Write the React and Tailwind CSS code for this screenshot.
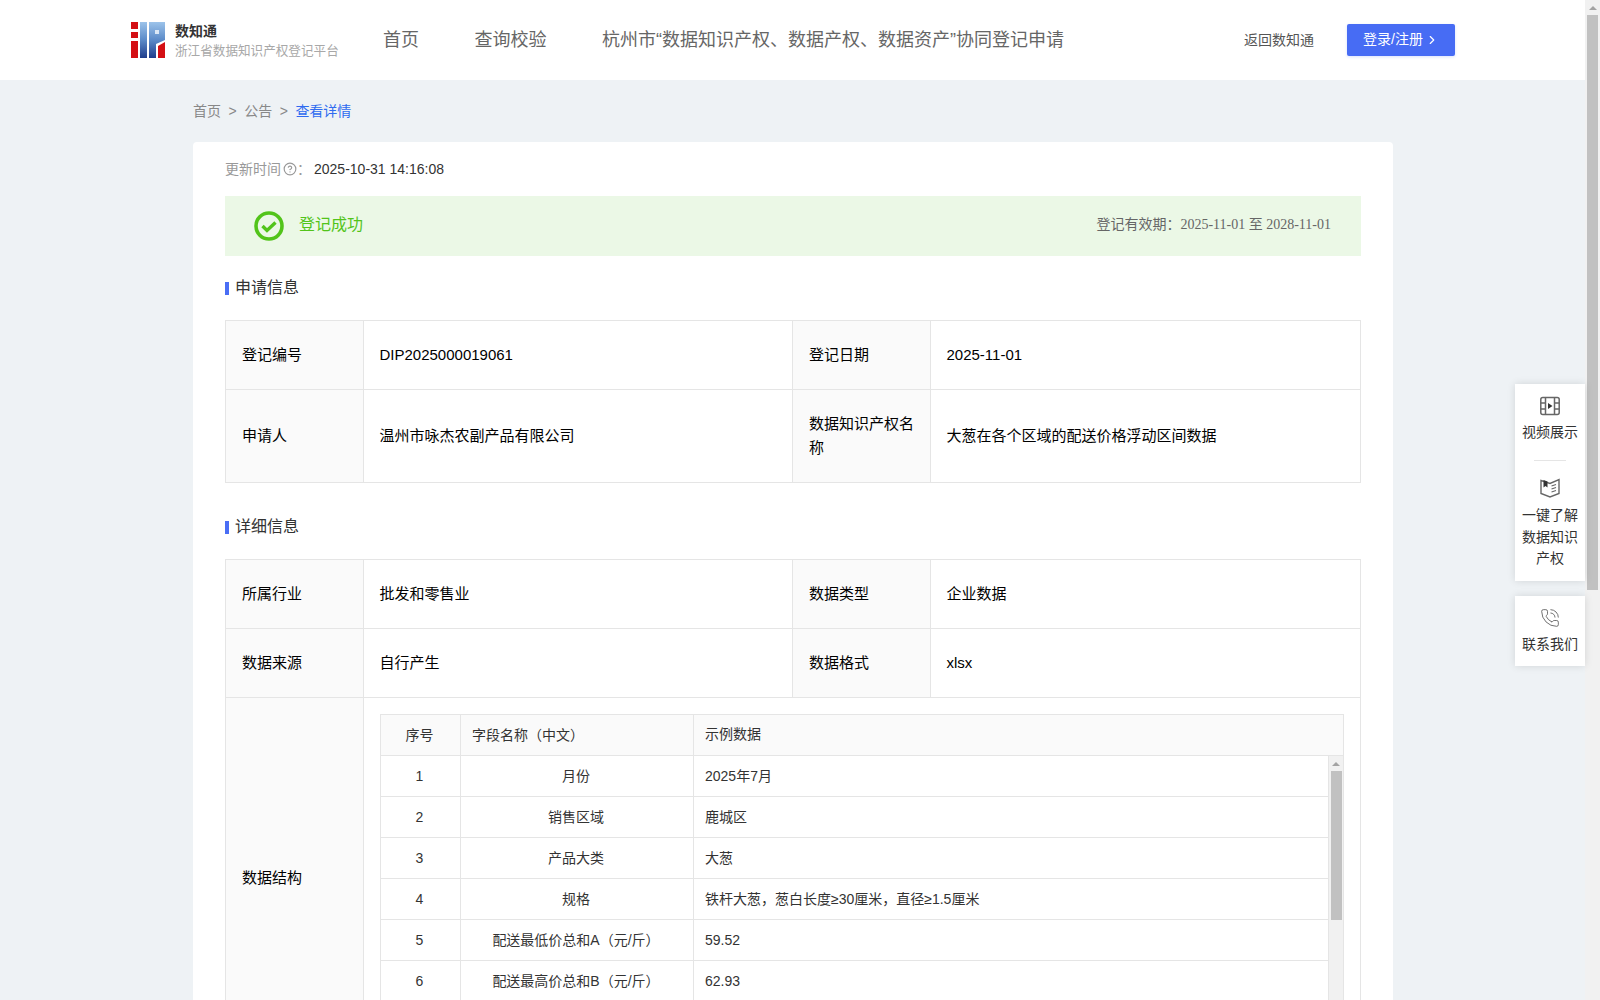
import React from "react";
import { ChevronRight, CircleHelp, PhoneCall } from "lucide-react";

const Logo = () => (
  <svg width="34" height="36" viewBox="0 0 34 36" className="shrink-0">
    <defs>
      <linearGradient id="lg" x1="0" y1="0" x2="0" y2="1">
        <stop offset="0" stopColor="#9cc3ea" />
        <stop offset="0.5" stopColor="#5b8ac8" />
        <stop offset="1" stopColor="#1f3d8c" />
      </linearGradient>
    </defs>
    <rect x="0" y="0" width="7" height="7" fill="#d40f14" />
    <rect x="0" y="10" width="7" height="6" fill="#d40f14" />
    <rect x="0" y="19" width="7" height="17" fill="#d40f14" />
    <rect x="9" y="0" width="7" height="36" fill="url(#lg)" />
    <path d="M18 0H34V18L25 22V36H18Z" fill="url(#lg)" />
    <rect x="24" y="8" width="4" height="4" fill="#dbe8f6" />
    <path d="M27 24L34 20V36H27Z" fill="#d40f14" />
  </svg>
);

const FilmIcon = () => (
  <svg width="20" height="20" viewBox="0 0 20 20" fill="none" stroke="#666" strokeWidth="1.5">
    <rect x="0.8" y="1.5" width="18.4" height="17" rx="2" />
    <path d="M5.5 1.5V18.5M14.5 1.5V18.5M0.8 7H5.5M0.8 13H5.5M14.5 7H19.2M14.5 13H19.2" />
    <path d="M8 7L12.5 10L8 13Z" fill="#333" stroke="none" />
  </svg>
);

const BookIcon = () => (
  <svg width="20" height="20" viewBox="0 0 20 20" fill="none" stroke="#666" strokeWidth="1.4">
    <path d="M1 2.5L10 5.5L19 1.5V15.5L10 19L1 15.5Z" />
    <path d="M3.5 2L7.5 3.5V9.5L5.5 8L3.5 9.5Z" fill="#333" stroke="none" />
    <path d="M11.5 8L16 6.5M11.5 11L16 9.5M11.5 14L16 12.5" strokeWidth="1.1" />
  </svg>
);

const CheckRing = () => (
  <svg width="30" height="30" viewBox="0 0 30 30" fill="none" className="shrink-0">
    <circle cx="15" cy="15" r="13" stroke="#52c41a" strokeWidth="3.6" />
    <path d="M8.5 15L13 19.5L21.5 11.5" stroke="#52c41a" strokeWidth="3.4" />
  </svg>
);

const SectionTitle = ({ children }) => (
  <div className="flex items-center h-6 text-[16px] text-[#333]">
    <span className="w-1 h-[13px] bg-[#4a6ef5] mr-[6px] mt-[3px]" />
    <span className="pt-[2px]">{children}</span>
  </div>
);

const Label = ({ children }) => (
  <td className="border border-[#e5e5e5] bg-[#fafafa] px-4 text-[15px] leading-6 text-black">{children}</td>
);
const Value = ({ children }) => (
  <td className="border border-[#e5e5e5] pl-[15.5px] pr-4 text-[15px] leading-6 text-black">{children}</td>
);

const Cols = () => (
  <colgroup>
    <col className="w-[138px]" />
    <col className="w-[429px]" />
    <col className="w-[138px]" />
    <col className="w-[430px]" />
  </colgroup>
);

const rows = [
  ["1", "月份", "2025年7月"],
  ["2", "销售区域", "鹿城区"],
  ["3", "产品大类", "大葱"],
  ["4", "规格", "铁杆大葱，葱白长度≥30厘米，直径≥1.5厘米"],
  ["5", "配送最低价总和A（元/斤）", "59.52"],
  ["6", "配送最高价总和B（元/斤）", "62.93"],
];

const InnerTable = () => (
  <div className="border border-[#e5e5e5] text-[14px] text-[#333]">
    <div className="grid grid-cols-[80px_233px_1fr] h-[41px] pb-[2px] bg-[#fafafa] border-b border-[#e5e5e5]">
      <div className="flex items-center justify-center pr-[2px] border-r border-[#e5e5e5] -mb-[2px]">序号</div>
      <div className="flex items-center pl-[11px] border-r border-[#e5e5e5] -mb-[2px]">字段名称（中文）</div>
      <div className="flex items-center pl-[11px]">示例数据</div>
    </div>
    <div className="flex h-[285px] overflow-hidden">
      <div className="flex-1 border-r border-[#e5e5e5]">
        {rows.map((r) => (
          <div key={r[0]} className="grid grid-cols-[80px_233px_1fr] h-[41px] border-b border-[#e5e5e5]">
            <div className="flex items-center justify-center pr-[2px] border-r border-[#e5e5e5]">{r[0]}</div>
            <div className="flex items-center justify-center pr-[2px] border-r border-[#e5e5e5]">{r[1]}</div>
            <div className="flex items-center pl-[11px]">{r[2]}</div>
          </div>
        ))}
      </div>
      <div className="w-[14px] bg-[#f1f1f1] flex flex-col items-center shrink-0">
        <div className="h-[15px] flex items-center justify-center">
          <span className="w-0 h-0 border-x-[4px] border-x-transparent border-b-[4px] border-b-[#a3a3a3]" />
        </div>
        <div className="w-[11px] h-[149px] bg-[#c1c1c1]" />
      </div>
    </div>
  </div>
);

const SideItem = ({ icon, textClass, children }) => (
  <div className="flex flex-col items-center">
    {icon}
    <div className={`${textClass} w-[56px] text-center text-[14px] leading-[21.8px] text-[#333]`}>{children}</div>
  </div>
);

export default function App() {
  return (
    <div className="relative flex h-screen overflow-hidden bg-[#eef2f5] [font-family:'Liberation_Sans','Noto_Sans_CJK_SC',sans-serif]">
      <div className="flex-1 min-w-0 overflow-hidden">
        <header className="h-20 bg-white flex items-center pl-[131px] pr-[130px]">
          <Logo />
          <div className="ml-[10px] w-[208px] shrink-0">
            <div className="text-[14px] leading-5 font-bold text-[#333]">数知通</div>
            <div className="pt-px text-[12.6px] leading-[18px] text-[#a8a8a8] whitespace-nowrap">浙江省数据知识产权登记平台</div>
          </div>
          <nav className="flex gap-[55.5px] text-[18px] text-[#666] whitespace-nowrap">
            <span>首页</span>
            <span>查询校验</span>
            <span>杭州市“数据知识产权、数据产权、数据资产”协同登记申请</span>
          </nav>
          <div className="ml-auto flex items-center gap-[33px]">
            <span className="text-[14px] text-[#555]">返回数知通</span>
            <button className="w-[108px] h-8 pb-px rounded-[2px] bg-[#476cf4] text-white text-[14px] flex items-center justify-center gap-[2px] shadow-[0_1px_3px_rgba(71,108,244,0.2)]">
              登录/注册 <ChevronRight size={14} />
            </button>
          </div>
        </header>

        <main className="ml-[193px] w-[1200px]">
          <div className="h-[62px] flex items-center text-[14px] text-[#888]">
            <span>首页</span>
            <span className="mx-[7.5px]">&gt;</span>
            <span>公告</span>
            <span className="mx-[7.5px]">&gt;</span>
            <span className="text-[#2f6bf0]">查看详情</span>
          </div>

          <section className="bg-white rounded-[4px] px-8 pt-4 pb-8">
            <div className="flex items-center h-[22px] text-[14px]">
              <span className="text-[#999]">更新时间</span>
              <CircleHelp size={14} className="text-[#999] ml-[2px]" />
              <span className="text-[#999]">：</span>
              <span className="text-[#333] ml-[3px]">2025-10-31 14:16:08</span>
            </div>

            <div className="mt-4 h-[60px] bg-[#ebf8e6] flex items-center pl-[29px] pr-[30px]">
              <CheckRing />
              <span className="ml-[15px] pb-[2px] text-[16px] text-[#52c41a]">登记成功</span>
              <span className="ml-auto pb-[3px] text-[14px] text-[#666]">
                登记有效期：<span className="[font-family:'Liberation_Serif','Noto_Sans_CJK_SC',serif]">2025-11-01 至 2028-11-01</span>
              </span>
            </div>

            <div className="mt-[19px] mb-[21px]">
              <SectionTitle>申请信息</SectionTitle>
            </div>

            <table className="w-[1135px] table-fixed border-collapse">
              <Cols />
              <tbody>
                <tr className="h-[69px]">
                  <Label>登记编号</Label>
                  <Value>DIP2025000019061</Value>
                  <Label>登记日期</Label>
                  <Value>2025-11-01</Value>
                </tr>
                <tr className="h-[93px]">
                  <Label>申请人</Label>
                  <Value>温州市咏杰农副产品有限公司</Value>
                  <Label>数据知识产权名称</Label>
                  <Value>大葱在各个区域的配送价格浮动区间数据</Value>
                </tr>
              </tbody>
            </table>

            <div className="mt-[31px] mb-[21px]">
              <SectionTitle>详细信息</SectionTitle>
            </div>

            <table className="w-[1135px] table-fixed border-collapse">
              <Cols />
              <tbody>
                <tr className="h-[69px]">
                  <Label>所属行业</Label>
                  <Value>批发和零售业</Value>
                  <Label>数据类型</Label>
                  <Value>企业数据</Value>
                </tr>
                <tr className="h-[69px]">
                  <Label>数据来源</Label>
                  <Value>自行产生</Value>
                  <Label>数据格式</Label>
                  <Value>xlsx</Value>
                </tr>
                <tr className="h-[360px]">
                  <Label>数据结构</Label>
                  <td colSpan={3} className="border border-[#e5e5e5] px-4 py-4 align-top">
                    <InnerTable />
                  </td>
                </tr>
              </tbody>
            </table>
          </section>
        </main>
      </div>

      <div className="w-[15px] shrink-0 bg-[#f1f1f1] flex flex-col items-center">
        <div className="h-[15px] flex items-center justify-center">
          <span className="w-0 h-0 border-x-[4px] border-x-transparent border-b-[4px] border-b-[#a3a3a3]" />
        </div>
        <div className="w-[11px] h-[575px] bg-[#c1c1c1]" />
      </div>

      <aside className="absolute right-[15px] top-[384px] w-[70px] flex flex-col gap-[15px]">
        <div className="bg-white h-[197px] pt-3 flex flex-col items-center shadow-[0_0_8px_rgba(0,0,0,0.12)]">
          <SideItem icon={<FilmIcon />} textClass="mt-[6px]">视频展示</SideItem>
          <div className="w-8 h-px bg-[#e5e5e5] mt-4 mb-[17px]" />
          <SideItem icon={<BookIcon />} textClass="mt-[7px]">一键了解数据知识产权</SideItem>
        </div>
        <div className="bg-white h-[70px] pt-3 flex flex-col items-center shadow-[0_0_8px_rgba(0,0,0,0.12)]">
          <SideItem icon={<PhoneCall size={20} strokeWidth={1} className="text-[#555]" />} textClass="mt-[6px]">联系我们</SideItem>
        </div>
      </aside>
    </div>
  );
}
